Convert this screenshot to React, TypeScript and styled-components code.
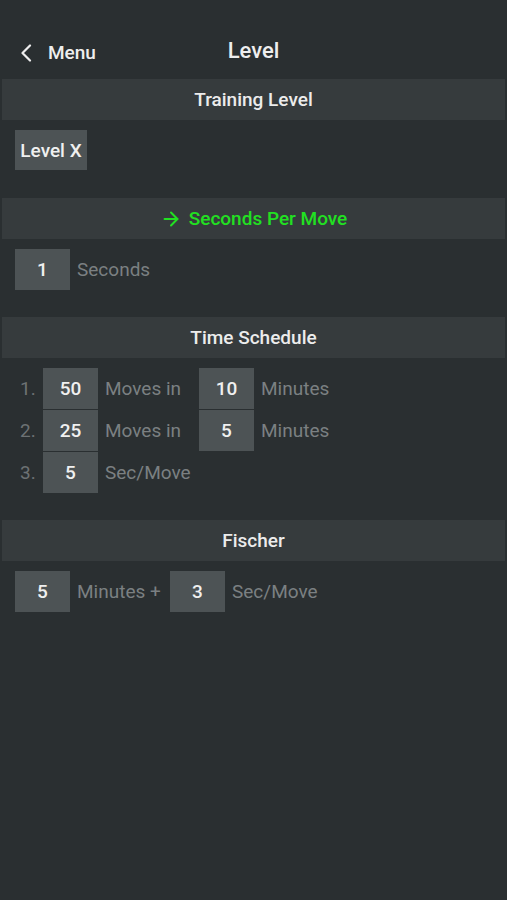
import { FunctionComponent } from "react";
import styled, { createGlobalStyle } from "styled-components";
import { ArrowRight } from "lucide-react";

const GlobalStyle = createGlobalStyle`
  html, body {
    margin: 0;
    padding: 0;
    background-color: #2a2f31;
  }
  body {
    font-family: Roboto, "Liberation Sans", sans-serif;
  }
`;

const Screen = styled.div`
  width: 507px;
  min-height: 900px;
  background-color: #2a2f31;
  color: #ececec;
  padding: 0 2px;
  box-sizing: border-box;
  display: flex;
  flex-direction: column;
`;

const NavBar = styled.header`
  height: 79px;
  display: grid;
  grid-template-columns: 1fr auto 1fr;
  align-items: center;
  padding-top: 22px;
  box-sizing: border-box;
`;

const BackButton = styled.div`
  display: flex;
  align-items: center;
  gap: 16px;
  padding-left: 18px;
  font-size: 19px;
  font-weight: 500;
  color: #eeeeee;
  padding-top: 4px;
`;

const NavTitle = styled.h1`
  margin: 0;
  font-size: 22px;
  font-weight: 500;
  color: #eeeeee;
`;

const SectionBar = styled.div<{ $accent?: boolean }>`
  height: 41px;
  background-color: #363b3d;
  display: flex;
  align-items: center;
  justify-content: center;
  gap: 7px;
  font-size: 19px;
  font-weight: 500;
  color: ${(p) => (p.$accent ? "#22e022" : "#ececec")};
`;

const SectionBody = styled.div<{ $bottom: number }>`
  padding: 10px 13px ${(p) => p.$bottom}px;
  display: flex;
  flex-direction: column;
  gap: 1px;
`;

const Row = styled.div`
  display: flex;
  align-items: center;
  height: 41px;
`;

const ValueBox = styled.div<{ $width?: number; $height?: number }>`
  width: ${(p) => p.$width ?? 55}px;
  height: ${(p) => p.$height ?? 41}px;
  background-color: #4d5355;
  display: flex;
  align-items: center;
  justify-content: center;
  font-size: 19px;
  font-weight: 500;
  color: #f0f0f0;
  flex-shrink: 0;
`;

const Label = styled.span<{ $width?: number }>`
  font-size: 19px;
  font-weight: 400;
  color: #7b8082;
  padding-left: 7px;
  ${(p) => (p.$width ? `width: ${p.$width}px; box-sizing: border-box;` : "")}
  white-space: nowrap;
`;

const StepNumber = styled.span`
  width: 28px;
  padding-left: 5px;
  box-sizing: border-box;
  font-size: 19px;
  font-weight: 400;
  color: #6d7274;
`;

const BackChevron = () => (
  <svg width="12" height="18" viewBox="0 0 12 18" fill="none">
    <polyline
      points="10,1.5 2.5,9 10,16.5"
      stroke="#eeeeee"
      strokeWidth="2.2"
      strokeLinecap="round"
      strokeLinejoin="round"
    />
  </svg>
);

const schedule = [
  { n: "1.", moves: "50", minutes: "10" },
  { n: "2.", moves: "25", minutes: "5" },
];

const App: FunctionComponent = () => {
  return (
    <>
      <GlobalStyle />
      <Screen>
        <NavBar>
          <BackButton>
            <BackChevron />
            Menu
          </BackButton>
          <NavTitle>Level</NavTitle>
          <div />
        </NavBar>

        <SectionBar>Training Level</SectionBar>
        <SectionBody $bottom={28}>
          <Row style={{ height: 40 }}>
            <ValueBox $width={72} $height={40}>Level X</ValueBox>
          </Row>
        </SectionBody>

        <SectionBar $accent>
          <ArrowRight size={22} strokeWidth={2.2} />
          Seconds Per Move
        </SectionBar>
        <SectionBody $bottom={27}>
          <Row>
            <ValueBox>1</ValueBox>
            <Label>Seconds</Label>
          </Row>
        </SectionBody>

        <SectionBar>Time Schedule</SectionBar>
        <SectionBody $bottom={27}>
          {schedule.map((s) => (
            <Row key={s.n}>
              <StepNumber>{s.n}</StepNumber>
              <ValueBox>{s.moves}</ValueBox>
              <Label $width={101}>Moves in</Label>
              <ValueBox>{s.minutes}</ValueBox>
              <Label>Minutes</Label>
            </Row>
          ))}
          <Row>
            <StepNumber>3.</StepNumber>
            <ValueBox>5</ValueBox>
            <Label>Sec/Move</Label>
          </Row>
        </SectionBody>

        <SectionBar>Fischer</SectionBar>
        <SectionBody $bottom={0}>
          <Row>
            <ValueBox>5</ValueBox>
            <Label $width={100}>Minutes +</Label>
            <ValueBox>3</ValueBox>
            <Label>Sec/Move</Label>
          </Row>
        </SectionBody>
      </Screen>
    </>
  );
};

export default App;
